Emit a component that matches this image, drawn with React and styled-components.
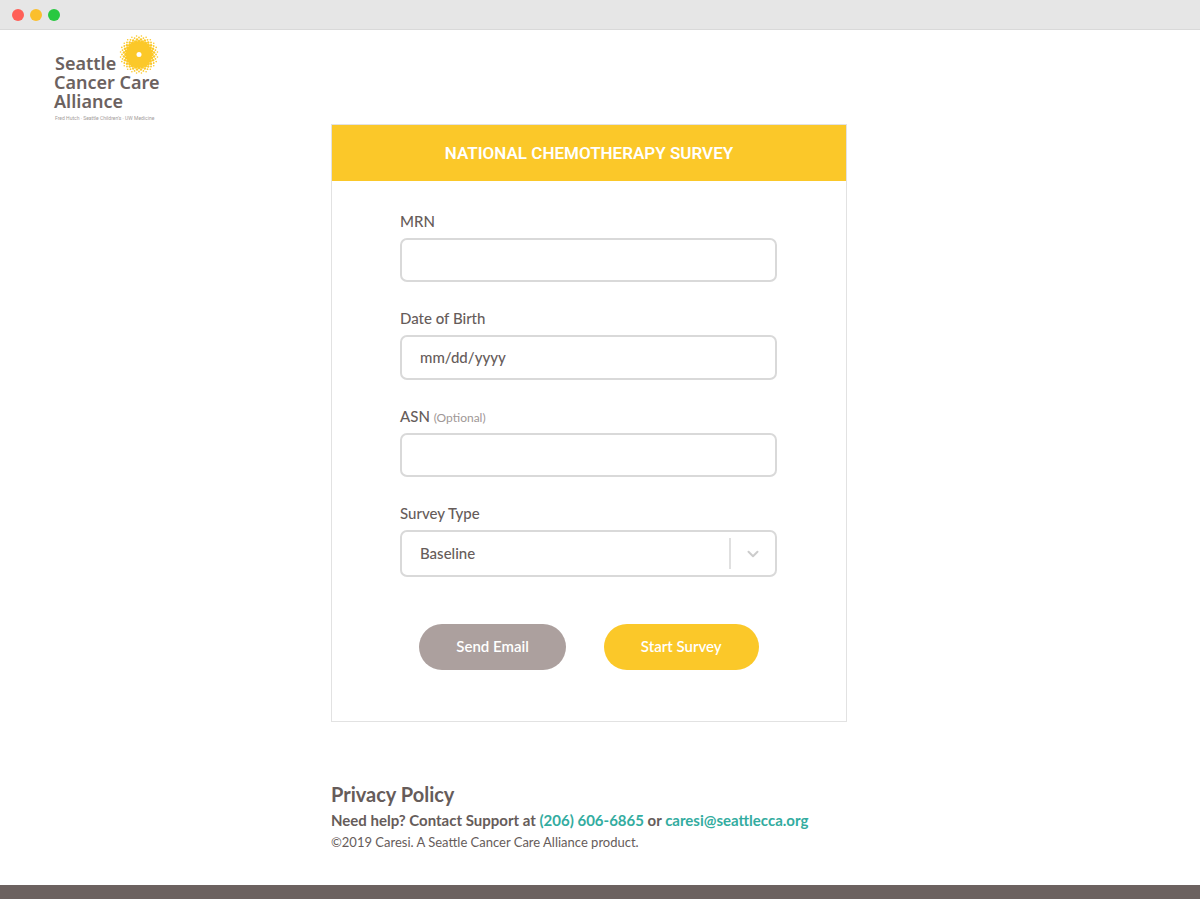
import React from "react";
import styled, { createGlobalStyle } from "styled-components";

const GlobalStyle = createGlobalStyle`
  * {
    box-sizing: border-box;
  }
  body {
    margin: 0;
    background-color: #ffffff;
    color: #665c5a;
    font-family: Lato, "Liberation Sans", sans-serif;
  }
`;

const Page = styled.div`
  display: flex;
  flex-direction: column;
  min-height: 100vh;
`;

const WindowBar = styled.div`
  display: flex;
  align-items: center;
  gap: 6px;
  height: 30px;
  padding: 0 12px;
  background-color: #e6e6e6;
  border-bottom: 1px solid #d9d9d9;
`;

const Dot = styled.span`
  width: 12px;
  height: 12px;
  border-radius: 50%;
  background-color: ${(props) => props.$color};
`;

const Header = styled.header`
  height: 94px;
  padding: 4px 52px 0;
`;

const Main = styled.main`
  display: flex;
  flex-direction: column;
  align-items: center;
  padding: 0 22px 32px 0;
`;

const Card = styled.form`
  width: 100%;
  max-width: 516px;
  border: 1px solid #e2e2e2;
`;

const Title = styled.h1`
  margin: 0;
  background-color: #fbc829;
  color: #ffffff;
  font-family: Roboto, sans-serif;
  font-size: 17px;
  font-weight: 600;
  line-height: 56px;
  text-align: center;
`;

const Fields = styled.div`
  display: flex;
  flex-direction: column;
  gap: 26px;
  padding: 30px 69px 0 68px;
`;

const Field = styled.div`
  display: flex;
  flex-direction: column;
  gap: 7px;
`;

const Label = styled.label`
  font-size: 15px;
  font-weight: 500;
  line-height: 20px;
`;

const Optional = styled.span`
  color: #a09796;
  font-size: 12px;
  font-weight: 400;
  line-height: 1;
`;

const Input = styled.input`
  width: 100%;
  height: ${(props) => props.$height || 44}px;
  padding: 0 18px 2px;
  border: 2px solid #d9d9d9;
  border-radius: 7px;
  background-color: #ffffff;
  color: #665c5a;
  font-family: inherit;
  font-size: 15px;
  font-weight: 500;

  &::placeholder {
    color: #665c5a;
    opacity: 1;
  }
`;

const SelectBox = styled.div`
  position: relative;
`;

const Select = styled(Input)`
  display: block;
  appearance: none;
`;

const Indicator = styled.span`
  position: absolute;
  top: 8px;
  bottom: 8px;
  right: 2px;
  display: flex;
  align-items: center;
  justify-content: center;
  width: 46px;
  border-left: 2px solid #e0e0e0;
  pointer-events: none;
`;

const Actions = styled.div`
  display: flex;
  justify-content: center;
  gap: 38px;
  padding: 47px 20px 51px;
`;

const Button = styled.button`
  height: 46px;
  padding: 0 37px 2px;
  border: none;
  border-radius: 23px;
  background-color: ${(props) => props.$color};
  color: #ffffff;
  font-family: inherit;
  font-size: 15px;
  font-weight: 600;
`;

const Footer = styled.footer`
  width: 100%;
  max-width: 516px;
  margin-top: 58px;
`;

const PolicyTitle = styled.h2`
  margin: 0;
  font-size: 20px;
  font-weight: 700;
  line-height: 28px;
`;

const Help = styled.p`
  margin: 0;
  font-size: 15px;
  font-weight: 700;
  line-height: 24px;
`;

const Link = styled.a`
  color: #33aca0;
  text-decoration: none;
`;

const Copyright = styled.p`
  margin: 0;
  font-size: 13px;
  line-height: 20px;
`;

const BottomBar = styled.div`
  height: 14px;
  margin-top: auto;
  background-color: #6c6260;
`;

const rings = [
  { radius: 13, size: 1.7, count: 24, shift: 0 },
  { radius: 15.2, size: 1.2, count: 24, shift: 0.5 },
  { radius: 17, size: 0.9, count: 24, shift: 0 },
  { radius: 18.6, size: 0.8, count: 24, shift: 0.5 },
];

function Sun() {
  return (
    <g fill="#fbc829">
      <circle cx="87" cy="20.5" r="13" />
      {rings.map((ring) =>
        Array.from({ length: ring.count }, (_, i) => {
          const angle = ((i + ring.shift) / ring.count) * Math.PI * 2;
          return (
            <circle
              key={`${ring.radius}-${i}`}
              cx={87 + Math.cos(angle) * ring.radius}
              cy={20.5 + Math.sin(angle) * ring.radius}
              r={ring.size}
            />
          );
        })
      )}
      <circle cx="87" cy="20.5" r="2.5" fill="#ffffff" />
    </g>
  );
}

function Logo() {
  return (
    <svg width="110" height="90" viewBox="0 0 110 90" role="img" aria-label="Seattle Cancer Care Alliance">
      <Sun />
      <g fill="#6c6260" fontFamily="Noto Sans, sans-serif" fontSize="18" fontWeight="600">
        <text x="3" y="36">Seattle</text>
        <text x="2" y="55">Cancer Care</text>
        <text x="2" y="74">Alliance</text>
      </g>
      <text x="3" y="86" fill="#a39c9a" fontFamily="Roboto, sans-serif" fontSize="5">
        Fred Hutch · Seattle Children’s · UW Medicine
      </text>
    </svg>
  );
}

class App extends React.Component {
  state = {
    mrn: "",
    dateOfBirth: "",
    asn: "",
    surveyType: "baseline",
  };

  onChange = (event) => {
    this.setState({ [event.target.name]: event.target.value });
  };

  onSubmit = (event) => {
    event.preventDefault();
  };

  render() {
    return (
      <Page>
        <GlobalStyle />
        <WindowBar>
          <Dot $color="#ff5f57" />
          <Dot $color="#fbbf2d" />
          <Dot $color="#28c840" />
        </WindowBar>
        <Header>
          <Logo />
        </Header>
        <Main>
          <Card onSubmit={this.onSubmit}>
            <Title>NATIONAL CHEMOTHERAPY SURVEY</Title>
            <Fields>
              <Field>
                <Label htmlFor="mrn">MRN</Label>
                <Input id="mrn" name="mrn" value={this.state.mrn} onChange={this.onChange} />
              </Field>
              <Field>
                <Label htmlFor="dateOfBirth">Date of Birth</Label>
                <Input
                  id="dateOfBirth"
                  name="dateOfBirth"
                  placeholder="mm/dd/yyyy"
                  $height={45}
                  value={this.state.dateOfBirth}
                  onChange={this.onChange}
                />
              </Field>
              <Field>
                <Label htmlFor="asn">
                  ASN <Optional>(Optional)</Optional>
                </Label>
                <Input id="asn" name="asn" value={this.state.asn} onChange={this.onChange} />
              </Field>
              <Field>
                <Label htmlFor="surveyType">Survey Type</Label>
                <SelectBox>
                  <Select
                    as="select"
                    id="surveyType"
                    name="surveyType"
                    $height={47}
                    value={this.state.surveyType}
                    onChange={this.onChange}
                  >
                    <option value="baseline">Baseline</option>
                  </Select>
                  <Indicator>
                    <svg width="12" height="8" viewBox="0 0 12 8" fill="none" stroke="#cccccc" strokeWidth="2" strokeLinecap="round" strokeLinejoin="round">
                      <path d="M1.5 1.8L6 6.2l4.500-4.400" />
                    </svg>
                  </Indicator>
                </SelectBox>
              </Field>
            </Fields>
            <Actions>
              <Button type="button" $color="#aca09e">
                Send Email
              </Button>
              <Button type="submit" $color="#fbc829">
                Start Survey
              </Button>
            </Actions>
          </Card>
          <Footer>
            <PolicyTitle>Privacy Policy</PolicyTitle>
            <Help>
              Need help? Contact Support at <Link href="tel:+12066066865">(206) 606-6865</Link> or{" "}
              <Link href="mailto:caresi@seattlecca.org">caresi@seattlecca.org</Link>
            </Help>
            <Copyright>©2019 Caresi. A Seattle Cancer Care Alliance product.</Copyright>
          </Footer>
        </Main>
        <BottomBar />
      </Page>
    );
  }
}

export default App;
